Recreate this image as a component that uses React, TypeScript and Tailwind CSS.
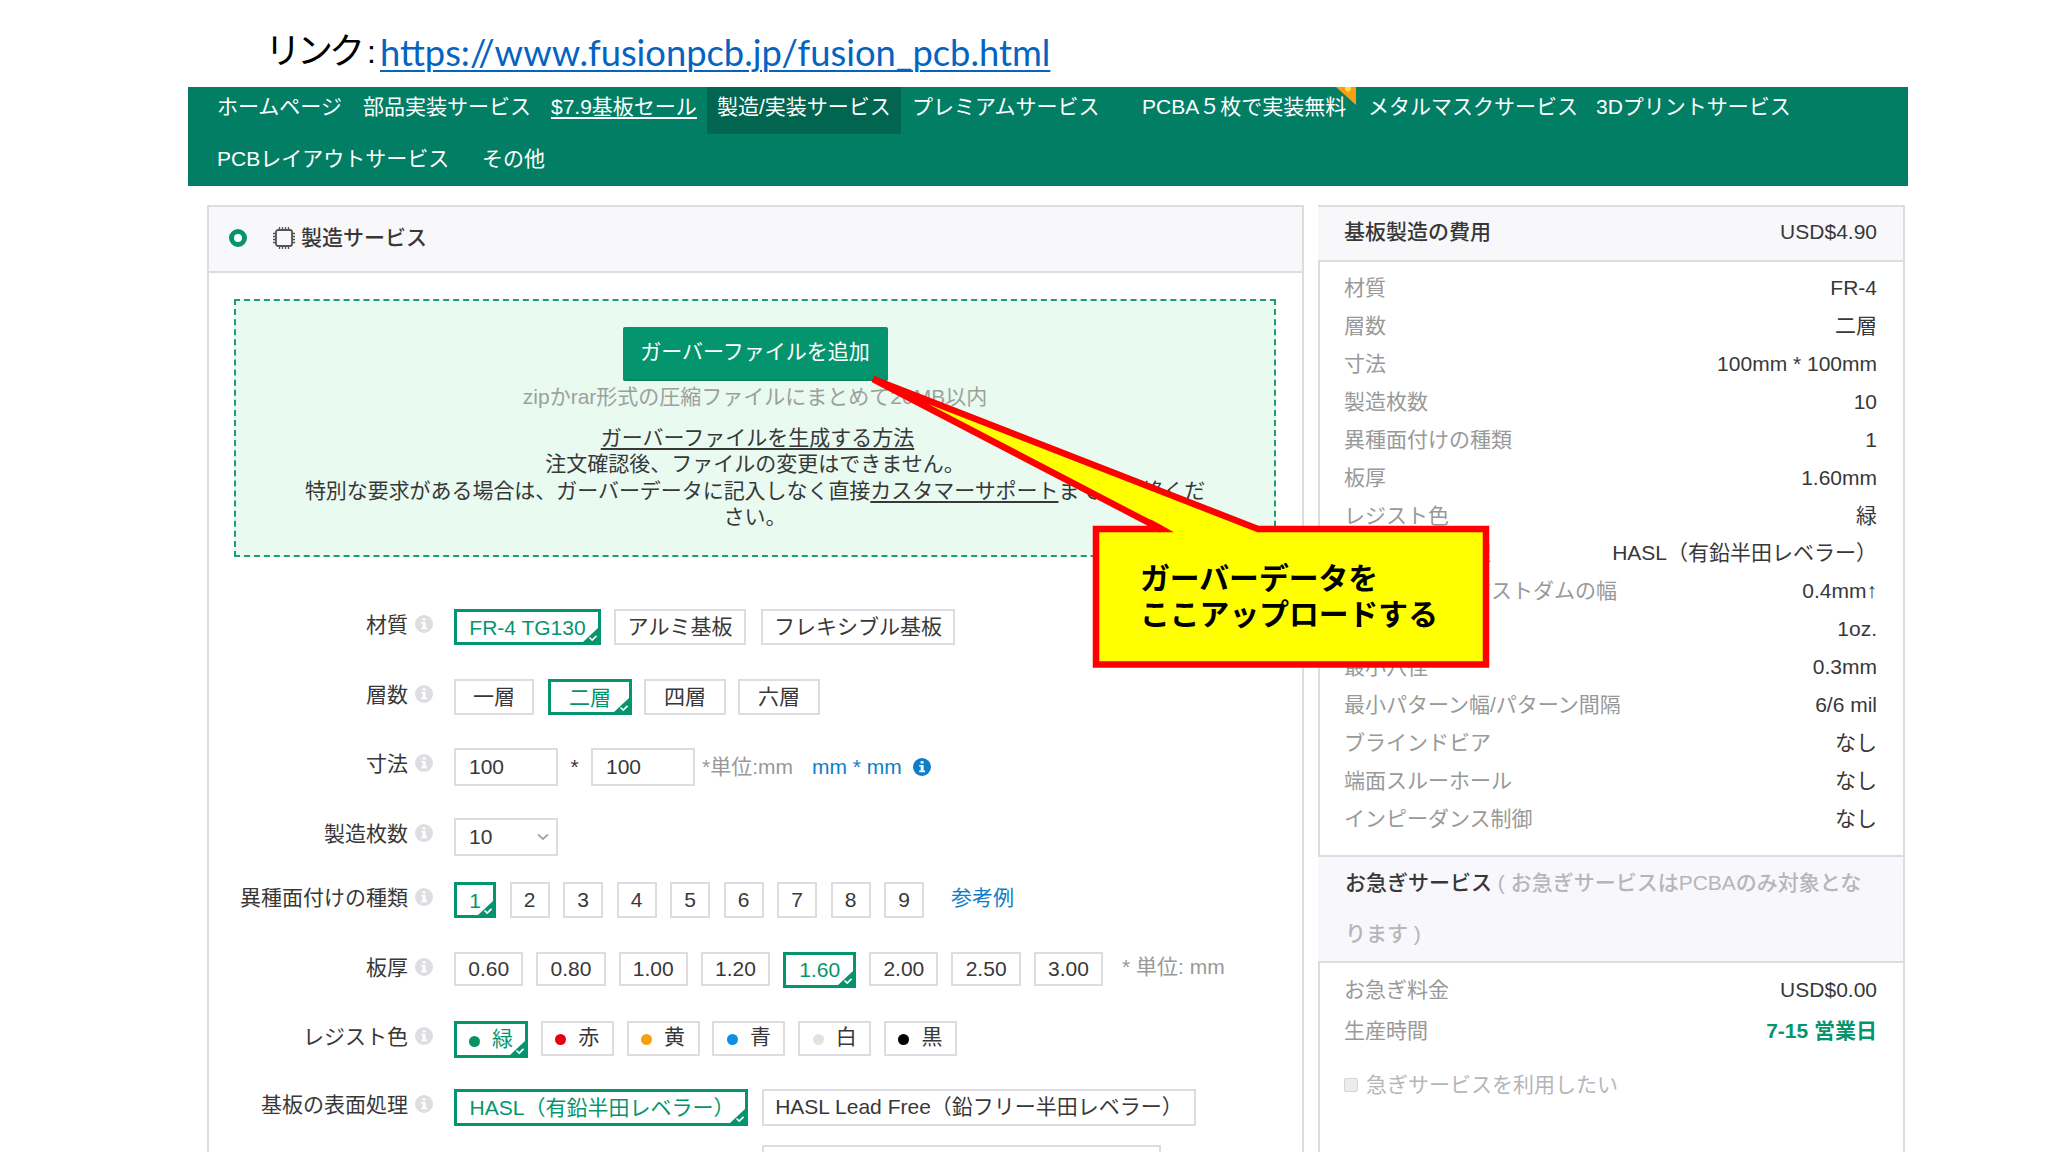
import type { ReactNode } from 'react';
import clsx from 'clsx';

const specs = [
  ['材質', 'FR-4'],
  ['層数', '二層'],
  ['寸法', '100mm * 100mm'],
  ['製造枚数', '10'],
  ['異種面付けの種類', '1'],
  ['板厚', '1.60mm'],
  ['レジスト色', '緑'],
  ['基板の表面処理', 'HASL（有鉛半田レベラー）'],
  ['最小ソルダレジストダムの幅', '0.4mm↑'],
  ['銅箔厚', '1oz.'],
  ['最小穴径', '0.3mm'],
  ['最小パターン幅/パターン間隔', '6/6 mil'],
  ['ブラインドビア', 'なし'],
  ['端面スルーホール', 'なし'],
  ['インピーダンス制御', 'なし'],
];

const colors = [
  { name: '緑', dot: 'bg-[#0a9160]', selected: true },
  { name: '赤', dot: 'bg-[#e60012]' },
  { name: '黄', dot: 'bg-[#f8a010]' },
  { name: '青', dot: 'bg-[#0f8fe0]' },
  { name: '白', dot: 'bg-[#e3e3de]' },
  { name: '黒', dot: 'bg-black' },
];

const thicknesses = ['0.60', '0.80', '1.00', '1.20', '1.60', '2.00', '2.50', '3.00'];

function InfoIcon({ className }: { className?: string }) {
  return (
    <svg viewBox="0 0 18 18" className={clsx('h-[18px] w-[18px] shrink-0', className)}>
      <circle cx="9" cy="9" r="9" fill="currentColor" />
      <path d="M7.6 3.2h3v2.4h-3zM6.2 7h4.4v5.6h1.4v1.6H6.2v-1.6h1.5v-4H6.2z" fill="#fff" />
    </svg>
  );
}

function Row({ label, className, children }: { label: string; className: string; children: ReactNode }) {
  return (
    <div className={clsx('flex items-start', className)}>
      <div className="w-[199px] shrink-0 text-right leading-[31px]">{label}</div>
      <InfoIcon className="mt-[6px] ml-[7px] mr-[21px] text-[#dedee2]" />
      {children}
    </div>
  );
}

function Option({ selected, className, children }: { selected?: boolean; className?: string; children: ReactNode }) {
  return (
    <div
      className={clsx(
        'relative flex shrink-0 items-center justify-center whitespace-nowrap',
        selected ? 'border-[3px] border-[#04956e] text-[#04956e] pt-px' : 'border-2 border-[#dddde1] pb-px',
        className,
      )}
    >
      {children}
      {selected && (
        <svg viewBox="0 0 15 14" className="absolute right-0 bottom-0 h-[14px] w-[15px]">
          <path d="M0 14L15 0V14z" fill="#04956e" />
          <path d="M6.5 9.5l2.7 2.6 4.3-4.2" fill="none" stroke="#fff" strokeWidth="1.7" />
        </svg>
      )}
    </div>
  );
}

function Nav() {
  return (
    <div className="ml-[188px] h-[99px] w-[1720px] bg-[#027e65] text-white">
      <div className="flex h-[52px] whitespace-nowrap pl-[29px] leading-[40px]">
        <div className="w-[146px]">ホームページ</div>
        <div className="w-[188px]">部品実装サービス</div>
        <div className="w-[156px] underline underline-offset-[3px]">$7.9基板セール</div>
        <div className="h-[47px] w-[194px] bg-[#01654f] pl-[10px]">製造/実装サービス</div>
        <div className="w-[241px] pl-[11px]">プレミアムサービス</div>
        <div className="relative w-[226px]">
          PCBA５枚で実装無料
          <svg viewBox="0 0 20 18" className="absolute top-0 left-[194px] h-[18px] w-[20px]">
            <path d="M0 0h20v18z" fill="#fb9e12" />
            <path d="M9 0h6v3l-3 2-3-2z" fill="#ffdc45" />
          </svg>
        </div>
        <div className="w-[228px]">メタルマスクサービス</div>
        <div>3Dプリントサービス</div>
      </div>
      <div className="flex whitespace-nowrap pl-[29px] leading-[40px]">
        <div className="w-[265px]">PCBレイアウトサービス</div>
        <div>その他</div>
      </div>
    </div>
  );
}

function UploadBox() {
  return (
    <div className="mr-[26px] ml-[25px] mt-[26px] flex h-[258px] flex-col items-center border-2 border-dashed border-[#1f9c76] bg-[#e9faf1] pt-[26px] whitespace-nowrap">
      <button className="h-[54px] w-[265px] rounded-[2px] border-b-2 border-[#0a8463] bg-[#04956e] pb-[2px] leading-[48px] text-white">
        ガーバーファイルを追加
      </button>
      <div className="leading-[31px] text-[#9aa19d]">zipかrar形式の圧縮ファイルにまとめて20MB以内</div>
      <div className="mt-[13px] text-center leading-[26.4px]">
        <div className="pl-[5px]">
          <span className="underline underline-offset-[3px]">ガーバーファイルを生成する方法</span>
        </div>
        <div>注文確認後、ファイルの変更はできません。</div>
        <div className="tracking-[-0.05px]">
          特別な要求がある場合は、ガーバーデータに記入しなく直接<span className="underline underline-offset-[3px]">カスタマーサポート</span>までご連絡くだ
        </div>
        <div>さい。</div>
      </div>
    </div>
  );
}

function OrderForm() {
  return (
    <div className="mt-[52px]">
      <Row label="材質" className="h-[70px]">
        <div className="flex h-[36px]">
          <Option selected className="w-[147px]">FR-4 TG130</Option>
          <Option className="ml-[13px] w-[132px]">アルミ基板</Option>
          <Option className="ml-[15px] w-[194px]">フレキシブル基板</Option>
        </div>
      </Row>
      <Row label="層数" className="h-[69px]">
        <div className="flex h-[36px]">
          <Option className="w-[80px]">一層</Option>
          <Option selected className="ml-[14px] w-[84px]">二層</Option>
          <Option className="ml-[12px] w-[82px]">四層</Option>
          <Option className="ml-[12px] w-[82px]">六層</Option>
        </div>
      </Row>
      <Row label="寸法" className="h-[70px]">
        <div className="flex h-[38px] items-center whitespace-nowrap">
          <div className="h-[38px] w-[104px] border-2 border-[#dddde1] pl-[13px] leading-[34px]">100</div>
          <div className="w-[33px] text-center">*</div>
          <div className="h-[38px] w-[104px] border-2 border-[#dddde1] pl-[13px] leading-[34px]">100</div>
          <div className="ml-[7px] w-[110px] text-[#999]">*単位:mm</div>
          <div className="w-[101px] text-[#0f7ec8]">mm * mm</div>
          <InfoIcon className="text-[#0f7ec8]" />
        </div>
      </Row>
      <Row label="製造枚数" className="h-[64px]">
        <div className="flex h-[38px] w-[104px] items-center justify-between border-2 border-[#dddde1] pr-[7px] pb-px pl-[13px]">
          10
          <svg viewBox="0 0 12 8" className="h-[8px] w-[12px]">
            <path d="M1 1.5l5 4.5 5-4.5" fill="none" stroke="#a5a5aa" strokeWidth="1.8" />
          </svg>
        </div>
      </Row>
      <Row label="異種面付けの種類" className="h-[70px]">
        <div className="flex h-[36px] gap-[13.5px]">
          <Option selected className="w-[42px]">1</Option>
          {[2, 3, 4, 5, 6, 7, 8, 9].map(n => (
            <Option key={n} className="w-[40px]">{n}</Option>
          ))}
        </div>
        <div className="ml-[27px] leading-[31px] text-[#0f7ec8]">参考例</div>
      </Row>
      <Row label="板厚" className="h-[69px]">
        <div className="flex items-start gap-[13px]">
          {thicknesses.map(t => (
            <Option key={t} selected={t === '1.60'} className={t === '1.60' ? 'h-[36px] w-[73px] pb-[2px]' : 'h-[34px] w-[69.3px]'}>{t}</Option>
          ))}
        </div>
        <div className="ml-[19px] leading-[30px] text-[#999]">* 単位: mm</div>
      </Row>
      <Row label="レジスト色" className="h-[68px]">
        <div className="flex items-start gap-[12.8px]">
          {colors.map(c => (
            <Option key={c.name} selected={c.selected} className={c.selected ? 'h-[37px] w-[74px]' : 'h-[35px] w-[73px]'}>
              <span className={clsx('mt-[2px] mr-[12px] h-[11px] w-[11px] rounded-full', c.dot)} />
              <span className="-mt-[2px]">{c.name}</span>
            </Option>
          ))}
        </div>
      </Row>
      <Row label="基板の表面処理" className="h-[56px]">
        <div className="flex h-[37px] gap-[14px]">
          <Option selected className="w-[294px] pl-[2px]">HASL（有鉛半田レベラー）</Option>
          <Option className="w-[434px]">HASL Lead Free（鉛フリー半田レベラー）</Option>
        </div>
      </Row>
      <div className="ml-[553px] h-[37px] w-[399px] border-2 border-[#dddde1]" />
    </div>
  );
}

function Summary() {
  return (
    <div className="h-[960px] w-[587px] border-2 border-[#dddde1]">
      <div className="-ml-[2px] flex h-[55px] items-center justify-between border-b-2 border-[#dddde1] bg-[#f8f8fb] pr-[26px] pb-[3px] pl-[26px]">
        <span className="font-medium">基板製造の費用</span>
        <span>USD$4.90</span>
      </div>
      <div className="h-[593px] pt-[7px] pr-[26px] pl-[24px]">
        {specs.map(([label, value]) => (
          <div key={label} className="flex h-[37.9px] items-center justify-between">
            <span className="text-[#999]">{label}</span>
            <span>{value}</span>
          </div>
        ))}
      </div>
      <div className="-ml-[2px] h-[108px] border-y-2 border-[#dddde1] bg-[#f8f7fb] px-[27px] leading-[51px] font-medium">
        お急ぎサービス <span className="text-[#b6b6ba]">( お急ぎサービスはPCBAのみ対象となります )</span>
      </div>
      <div className="pt-[7px] pr-[26px] pl-[24px]">
        <div className="flex h-[40px] items-center justify-between">
          <span className="text-[#999]">お急ぎ料金</span>
          <span>USD$0.00</span>
        </div>
        <div className="flex h-[41px] items-center justify-between">
          <span className="text-[#999]">生産時間</span>
          <span className="font-bold text-[#04956e]">7-15 営業日</span>
        </div>
        <div className="mt-[13px] flex h-[41px] items-center text-[#b6b6ba]">
          <span className="mr-[8px] h-[14px] w-[14px] rounded-[2px] border border-[#d4d4d8] bg-[#ececef]" />
          急ぎサービスを利用したい
        </div>
      </div>
    </div>
  );
}

function Callout() {
  return (
    <div className="absolute top-[370px] left-[864px] h-[300px] w-[628px]">
      <svg viewBox="864 370 628 300" className="absolute inset-0 h-full w-full">
        <path
          d="M1096 529H1161L873 379L1258 529H1486V664.5H1096z"
          fill="#ffff00"
          stroke="#ff0000"
          strokeWidth="6.5"
        />
        {/* the tail opens straight into the box, no notch */}
        <path d="M1159 532.3H1174L1150 519z" fill="#ff0000" />
      </svg>
      <div className="relative pt-[191px] pl-[276px] text-[29.8px] leading-[36px] font-bold whitespace-nowrap text-black">
        <p>ガーバーデータを</p>
        <p>ここアップロードする</p>
      </div>
    </div>
  );
}

export default function App() {
  return (
    <div className="relative h-[1152px] w-[2048px] overflow-hidden bg-white font-['Liberation_Sans','Noto_Sans_CJK_JP',sans-serif] text-[21px] text-[#383838]">
      <div className="flex h-[87px] items-center pt-[17px] pl-[265px] whitespace-nowrap text-black">
        <span className="w-[98px] text-[36px] leading-[50px] tracking-[-4px]">リンク</span>
        <span className="w-[17px] text-[32px] leading-[50px] pl-[4px]">:</span>
        <span className="font-[Lato,sans-serif] text-[36.300px] leading-[50px] text-[#0563c1] underline decoration-2 underline-offset-[4px]">
          https://www.fusionpcb.jp/fusion_pcb.html
        </span>
      </div>
      <Nav />
      <div className="mt-[19px] ml-[207px] flex gap-[14px]">
        <div className="h-[960px] w-[1097px] border-2 border-[#dddde1]">
          <div className="flex h-[66px] items-center border-b-2 border-[#dddde1] bg-[#f8f8fb] pb-[3px] pl-[20px]">
            <span className="h-[18px] w-[18px] rounded-full border-[5.5px] border-[#04956e] bg-white" />
            <svg viewBox="0 0 24 24" className="mr-[5px] ml-[25px] h-[24px] w-[24px]" fill="none" stroke="#555">
              <rect x="4" y="4" width="16" height="16" rx="2" strokeWidth="1.8" />
              <path d="M7.5 1v3M10.5 1v3M13.5 1v3M16.5 1v3M7.5 20v3M10.5 20v3M13.5 20v3M16.5 20v3M1 7.5h3M1 10.5h3M1 13.5h3M1 16.5h3M20 7.5h3M20 10.5h3M20 13.5h3M20 16.5h3" strokeWidth="1.3" />
            </svg>
            <span className="font-medium">製造サービス</span>
          </div>
          <UploadBox />
          <OrderForm />
        </div>
        <Summary />
      </div>
      <Callout />
    </div>
  );
}
